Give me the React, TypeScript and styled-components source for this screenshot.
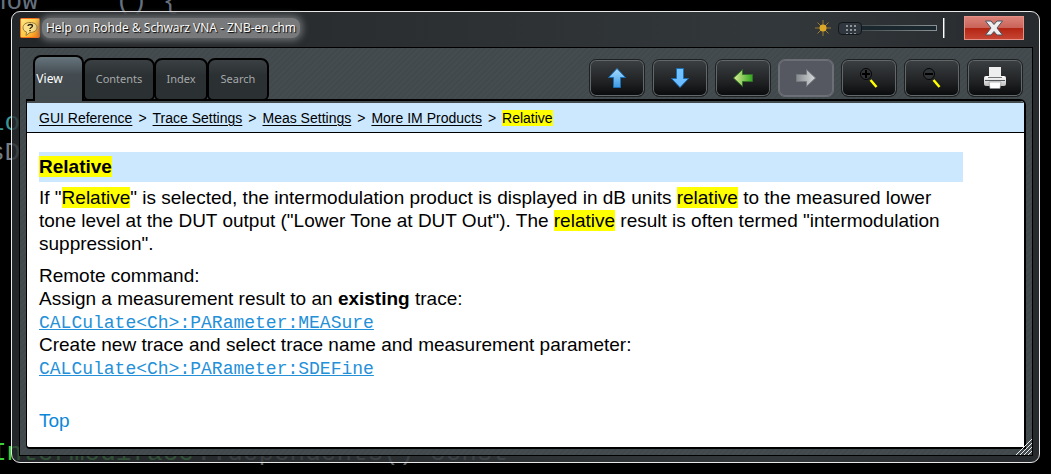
import React from 'react';
import styled, { createGlobalStyle } from 'styled-components';

const GlobalStyle = createGlobalStyle`
  * { box-sizing: border-box; }
  html, body { margin: 0; height: 100%; background: #000; overflow: hidden; }
  #root { height: 100%; }
  button { font: inherit; color: inherit; cursor: pointer; }
`;

const Desktop = styled.div`
  position: relative;
  display: flex;
  height: 100%;
  min-height: 300px;
  padding: 11px;
  background: #000;
  font-family: 'Liberation Sans', Arial, sans-serif;
`;

const CodeLine = styled.div<{ $top: number; $left: number; $color: string }>`
  position: absolute;
  top: ${(p) => p.$top}px;
  left: ${(p) => p.$left}px;
  color: ${(p) => p.$color};
  font: 26px/30px 'Liberation Mono', monospace;
  white-space: pre;
`;

const Window = styled.section`
  position: relative;
  flex: 1;
  display: flex;
  flex-direction: column;
  min-width: 0;
  padding: 0 6px 6px 7px;
  border: 1px solid #e8e8e8;
  border-radius: 9px;
  background: linear-gradient(90deg, rgba(44, 48, 51, 0.8), rgba(60, 66, 70, 0.84) 75%, rgba(46, 50, 54, 0.84));
`;

const TitleBar = styled.header`
  display: flex;
  align-items: center;
  flex: 0 0 35px;
  padding: 0 9px 3px 1px;
`;

const Title = styled.h1`
  margin: 0 auto 0 2px;
  padding: 0 4px;
  border-radius: 8px;
  background: #77797b;
  box-shadow: 0 0 6px 3px #66696b;
  color: #fff;
  font: 12px/20px 'Open Sans', sans-serif;
  text-shadow: 1px 1px 1px #000;
  white-space: nowrap;
`;

const Slider = styled.input`
  appearance: none;
  width: 99px;
  height: 14px;
  margin: 0 6px 0 7px;
  background:
    linear-gradient(#1a272e, #1a272e) 0 5px / 98px 4px no-repeat,
    linear-gradient(90deg, #4a5256 30%, #8b9194) 0 4px / 99px 6px no-repeat;
  &::-webkit-slider-thumb {
    appearance: none;
    width: 24px;
    height: 13px;
    border: 1px solid #11171b;
    border-radius: 4px;
    background:
      repeating-linear-gradient(90deg, transparent 0 2px, #30373e 2px 4px) 7px 0 / 10px 11px no-repeat,
      repeating-linear-gradient(#30373e 0 2px, #90959a 2px 4px) 7px 0 / 10px 11px no-repeat,
      #30373e;
  }
`;

const Divider = styled.span`
  width: 2px;
  height: 20px;
  margin-right: 19px;
  background: linear-gradient(90deg, #fff 50%, #888 50%);
`;

const CloseButton = styled.button`
  display: grid;
  place-items: center;
  width: 60px;
  height: 24px;
  padding: 0;
  border: 1px solid #e69187;
  background: linear-gradient(#dc8278, #c9645a 48%, #b42513 52%, #c64432);
`;

const Frame = styled.div`
  flex: 1;
  display: flex;
  flex-direction: column;
  min-height: 0;
  padding: 7px 7px 6px;
  border: 1px solid #000;
  background: repeating-linear-gradient(135deg, #41494c 0 2px, #444c4f 2px 4px);
`;

const TopRow = styled.div`
  position: relative;
  z-index: 1;
  display: flex;
  justify-content: space-between;
  align-items: flex-start;
  height: 44px;
`;

const Tabs = styled.nav`
  display: flex;
  align-items: flex-start;
  margin-left: 6px;
`;

const Tab = styled.button<{ $width: number; $active?: boolean }>`
  width: ${(p) => p.$width}px;
  height: ${(p) => (p.$active ? 46 : 43)}px;
  margin: ${(p) => (p.$active ? 0 : 3)}px -1px 0 0;
  padding: ${(p) => (p.$active ? '0 18px 1px 0' : '0 0 2px')};
  border: 2px solid #000;
  border-bottom-width: ${(p) => (p.$active ? 0 : 2)}px;
  border-radius: ${(p) => (p.$active ? '8px 8px 0 0' : '8px 8px 6px 6px')};
  background: ${(p) => (p.$active ? 'linear-gradient(#66747c, #434b50 40%, #41494c)' : 'linear-gradient(#3a4043, #2b3032 40%)')};
  color: ${(p) => (p.$active ? '#fff' : '#a5a8aa')};
  font: ${(p) => (p.$active ? 12 : 11)}px/18px 'Noto Sans', sans-serif;
  text-align: center;
`;

const Tools = styled.div`
  display: flex;
  gap: 7px;
  margin: 4px 2px 0 0;
`;

const ToolButton = styled.button`
  display: grid;
  place-items: center;
  width: 56px;
  height: 38px;
  padding: 0;
  border: 1px solid #1d2122;
  border-radius: 7px;
  background: linear-gradient(#3c4042, #202224 60%, #090a0b);
  box-shadow: inset 0 0 0 1px #62676a;
  &:disabled {
    border-color: #6b6e74;
    background: #555861;
    box-shadow: inset 0 0 0 1px #6d7076;
  }
`;

const Page = styled.div`
  flex: 1;
  display: flex;
  flex-direction: column;
  min-height: 0;
  margin: 0 -1px;
  border: solid #000;
  border-width: 2px 2px 2px 1px;
  border-radius: 0 6px 0 4px;
  background: #fff;
  color: #000;
  overflow: hidden;
`;

const Breadcrumb = styled.nav`
  display: flex;
  gap: 6px;
  height: 32px;
  padding: 6px 12px 0;
  border-top: 2px solid #444b4e;
  border-bottom: 1px solid #000;
  background: #cce8ff;
  font-size: 14px;
  line-height: 18px;
  white-space: nowrap;
`;

const Crumb = styled.a`
  color: #000;
  text-underline-offset: 2px;
`;

const Mark = styled.mark`
  background: #ff0;
  color: inherit;
`;

const Article = styled.article`
  padding: 19px 61px 0 12px;
  font-size: 19px;
  line-height: 23px;
`;

const Heading = styled.h2`
  margin: 0 0 4px;
  font-size: 19px;
  line-height: 30px;
  background: #cce8ff;
`;

const Paragraph = styled.p`
  margin: 0 0 9px;
`;

const CommandLink = styled.a`
  color: #2490d8;
  font-family: 'Liberation Mono', monospace;
  font-size: 18px;
  line-height: 20px;
`;

const TopLink = styled.a`
  display: inline-block;
  margin-top: 21px;
  color: #0a87d8;
  text-decoration: none;
`;

const Grip = styled.svg`
  position: absolute;
  right: 6px;
  bottom: 6px;
`;

const ArrowIcon = ({ angle, from, to, edge }: { angle: number; from: string; to: string; edge: string }) => (
  <svg width="22" height="22" viewBox="0 0 22 22">
    <defs>
      <linearGradient id={`arrow${angle}`} x1="0" y1="0" x2="0" y2="1">
        <stop offset="0" stopColor={from} />
        <stop offset="1" stopColor={to} />
      </linearGradient>
    </defs>
    <path transform={`rotate(${angle} 11 11)`} d="M11 1.500 19.500 10.500H14.500V20.500H7.500V10.500H2.500Z" fill={`url(#arrow${angle})`} stroke={edge} />
  </svg>
);

const ZoomIcon = ({ plus }: { plus?: boolean }) => (
  <svg width="22" height="22" viewBox="0 0 22 22">
    <circle cx="8" cy="7" r="5.500" fill="#303335" stroke="#050505" />
    <path d={plus ? 'M4 7H12M8 3V11' : 'M4 7H12'} stroke="#000" strokeWidth="2" />
    <path d="M12.500 13 18.500 20" stroke="#ff0" strokeWidth="2.500" />
  </svg>
);

const PrintIcon = () => (
  <svg width="24" height="24" viewBox="0 0 24 24">
    <defs>
      <linearGradient id="printer" x1="0" y1="0" x2="0" y2="1">
        <stop offset="0" stopColor="#fff" />
        <stop offset="1" stopColor="#bdbdbd" />
      </linearGradient>
    </defs>
    <rect x="1" y="10" width="22" height="10" rx="2" fill="url(#printer)" />
    <path d="M2 14.500H22" stroke="#55585a" />
    <path d="M6 1H18V11H6Z" fill="#eee" />
    <path d="M5 11.500H19" stroke="#777" />
    <path d="M6 16H18L17 22.500H7Z" fill="#fff" stroke="#888" strokeWidth=".6" />
  </svg>
);

const HelpIcon = () => (
  <svg width="20" height="20" viewBox="0 0 20 20">
    <defs>
      <linearGradient id="help" x1="0" y1="0" x2="1" y2="1">
        <stop offset="0" stopColor="#ffe98a" />
        <stop offset=".6" stopColor="#ffc53b" />
        <stop offset="1" stopColor="#f8700c" />
      </linearGradient>
    </defs>
    <rect x=".5" y=".5" width="19" height="19" rx="1" fill="url(#help)" stroke="#f5701a" />
    <path d="M10 4.500C14.500 4.500 17 6.500 17 9.500S14 14.500 10 14.500L6 17.500 6.500 14C4 13 3 12 3 9.500 3 6.500 6 4.500 10 4.500Z" fill="#fbe08a" stroke="#9a7a3a" />
    <path d="M8 8C8 6 12.500 6 12.500 8 12.500 9.500 10 9.500 10 11M10 12V13.300" fill="none" stroke="#262015" strokeWidth="1.300" />
  </svg>
);

const SunIcon = () => (
  <svg width="16" height="16" viewBox="0 0 16 16">
    <path d="M8 0V16M0 8H16M2.500 2.500 13.500 13.500M13.500 2.500 2.500 13.500" stroke="#9a7a32" />
    <circle cx="8" cy="8" r="3.500" fill="#dca827" />
  </svg>
);

const crumbs = ['GUI Reference', 'Trace Settings', 'Meas Settings', 'More IM Products'];

export default function App() {
  return (
    <Desktop>
      <GlobalStyle />
      <CodeLine $top={-13} $left={-9} $color="#66717f">{'now     () {'}</CodeLine>
      <CodeLine $top={108} $left={-11} $color="#3c9593">lo</CodeLine>
      <CodeLine $top={138} $left={-11} $color="#747d83">sD</CodeLine>
      <CodeLine $top={438} $left={-9} $color="#3ecf3e">Intermodiface</CodeLine>
      <CodeLine $top={438} $left={196} $color="#5d6265">::dependents() const</CodeLine>
      <Window>
        <TitleBar>
          <HelpIcon />
          <Title>Help on Rohde &amp; Schwarz VNA - ZNB-en.chm</Title>
          <SunIcon />
          <Slider type="range" min="0" max="100" defaultValue="0" aria-label="Brightness" />
          <Divider />
          <CloseButton aria-label="Close">
            <svg width="20" height="16" viewBox="0 0 20 16">
              <path d="M1.500 1H7L10 4.500 13 1H18.500L13 8 18.500 15H13L10 11.500 7 15H1.500L7 8Z" fill="#eee" stroke="#4d5260" />
            </svg>
          </CloseButton>
        </TitleBar>
        <Frame>
          <TopRow>
            <Tabs>
              <Tab $width={51} $active>View</Tab>
              <Tab $width={72}>Contents</Tab>
              <Tab $width={54}>Index</Tab>
              <Tab $width={62}>Search</Tab>
            </Tabs>
            <Tools>
              <ToolButton aria-label="Previous topic"><ArrowIcon angle={0} from="#a6dcff" to="#3b9ae6" edge="#1c6fb4" /></ToolButton>
              <ToolButton aria-label="Next topic"><ArrowIcon angle={180} from="#67baff" to="#75c4ff" edge="#1c6fb4" /></ToolButton>
              <ToolButton aria-label="Back"><ArrowIcon angle={270} from="#e0ef98" to="#30a51f" edge="#327327" /></ToolButton>
              <ToolButton aria-label="Forward" disabled><ArrowIcon angle={90} from="#d9dcde" to="#858a8e" edge="#777b80" /></ToolButton>
              <ToolButton aria-label="Zoom in"><ZoomIcon plus /></ToolButton>
              <ToolButton aria-label="Zoom out"><ZoomIcon /></ToolButton>
              <ToolButton aria-label="Print"><PrintIcon /></ToolButton>
            </Tools>
          </TopRow>
          <Page>
            <Breadcrumb>
              {crumbs.map((name) => (
                <React.Fragment key={name}>
                  <Crumb href="#">{name}</Crumb>
                  <span>&gt;</span>
                </React.Fragment>
              ))}
              <span><Mark>Relative</Mark></span>
            </Breadcrumb>
            <Article>
              <Heading><Mark>Relative</Mark></Heading>
              <Paragraph>
                If "<Mark>Relative</Mark>" is selected, the intermodulation product is displayed in dB units <Mark>relative</Mark> to the measured lower tone level at the DUT output ("Lower Tone at DUT Out"). The <Mark>relative</Mark> result is often termed "intermodulation suppression".
              </Paragraph>
              <Paragraph>
                Remote command:<br />
                Assign a measurement result to an <b>existing</b> trace:<br />
                <CommandLink href="#">CALCulate&lt;Ch&gt;:PARameter:MEASure</CommandLink><br />
                Create new trace and select trace name and measurement parameter:<br />
                <CommandLink href="#">CALCulate&lt;Ch&gt;:PARameter:SDEFine</CommandLink>
              </Paragraph>
              <TopLink href="#">Top</TopLink>
            </Article>
          </Page>
        </Frame>
        <Grip width="18" height="18" viewBox="0 0 18 18" aria-hidden="true">
          <path d="M1 17 17 1M5 17 17 5M9 17 17 9M13 17 17 13" stroke="#eee" />
        </Grip>
      </Window>
    </Desktop>
  );
}
